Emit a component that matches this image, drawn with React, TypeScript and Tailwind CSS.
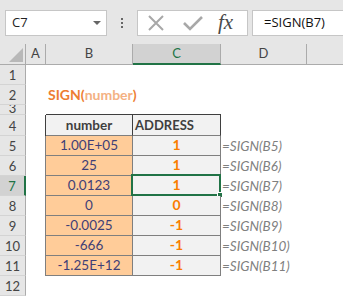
import React from "react";

const cellFont = { fontFamily: "Lato, 'Liberation Sans', sans-serif" };
const uiFont = { fontFamily: "'Open Sans', 'Noto Sans', sans-serif" };

const dataRows = [
  { n: 5, v: "1.00E+05", r: "1", f: "=SIGN(B5)" },
  { n: 6, v: "25", r: "1", f: "=SIGN(B6)" },
  { n: 7, v: "0.0123", r: "1", f: "=SIGN(B7)" },
  { n: 8, v: "0", r: "0", f: "=SIGN(B8)" },
  { n: 9, v: "-0.0025", r: "-1", f: "=SIGN(B9)" },
  { n: 10, v: "-666", r: "-1", f: "=SIGN(B10)" },
  { n: 11, v: "-1.25E+12", r: "-1", f: "=SIGN(B11)" },
];

function RowHead({ n, sel = false }: { n: number; sel?: boolean }) {
  return (
    <div
      className={
        "w-[26px] shrink-0 flex items-end justify-center overflow-hidden border-b border-[#d4d4d4] text-[13px] leading-[18px] " +
        (sel
          ? "bg-[#d2d2d2] border-r-2 border-r-[#217346] text-[#217346]"
          : "bg-[#e6e6e6] border-r border-r-[#ababab] text-[#444444]")
      }
      style={cellFont}
    >
      <span>{n}</span>
    </div>
  );
}

function ColHead({ label, w, sel = false }: { label: string; w: string; sel?: boolean }) {
  return (
    <div
      className={
        w +
        " shrink-0 flex items-center justify-center text-[13px] border-r border-[#ababab] " +
        (sel
          ? "bg-[#d2d2d2] border-b-2 border-b-[#217346] text-[#217346]"
          : "bg-[#e6e6e6] border-b border-b-[#ababab] text-[#444444]")
      }
      style={cellFont}
    >
      {label}
    </div>
  );
}

export default function App() {
  return (
    <div className="w-[343px] h-[296px] overflow-hidden bg-white flex flex-col">
      {/* Formula bar */}
      <div className="h-[44px] shrink-0 bg-[#e6e6e6] flex items-start pt-[10px]">
        <div className="ml-[5px] w-[102px] h-[26px] bg-white border border-[#c6c6c6] flex items-center justify-between pl-[6px] pr-[5px]">
          <span className="text-[13px] text-[#222]" style={uiFont}>C7</span>
          <svg width="8" height="4" viewBox="0 0 8 4">
            <path d="M0 0 L8 0 L4 4 Z" fill="#666" />
          </svg>
        </div>
        <div className="ml-[14px] w-[2px] h-[26px] flex flex-col items-center justify-center gap-[2px]">
          <div className="w-[2px] h-[2px] bg-[#666]" />
          <div className="w-[2px] h-[2px] bg-[#666]" />
          <div className="w-[2px] h-[2px] bg-[#666]" />
        </div>
        <div className="ml-[14px] w-[111px] h-[26px] bg-white border border-[#c6c6c6] flex items-center">
          <svg className="ml-[9px]" width="18" height="16" viewBox="0 0 18 16">
            <path d="M2 1 L16 15 M16 1 L2 15" stroke="#a8a8a8" strokeWidth="2" fill="none" />
          </svg>
          <svg className="ml-[18px]" width="20" height="16" viewBox="0 0 20 16">
            <path d="M1 8 L7 14 L19 2" stroke="#a8a8a8" strokeWidth="2.6" fill="none" />
          </svg>
          <span
            className="ml-[15px] text-[21px] leading-none italic text-[#4a4a4a] -mt-[2px]"
            style={{ fontFamily: "'Liberation Serif', 'DejaVu Serif', serif" }}
          >
            fx
          </span>
        </div>
        <div className="ml-[4px] flex-1 h-[26px] bg-white border border-r-0 border-[#c6c6c6] flex items-center pl-[11px]">
          <span className="text-[13px] text-[#111]" style={uiFont}>=SIGN(B7)</span>
        </div>
      </div>

      {/* Column headers */}
      <div className="h-[21px] shrink-0 flex">
        <div className="w-[26px] shrink-0 bg-[#e6e6e6] border-r border-b border-[#ababab] relative overflow-hidden">
          <svg className="absolute right-[2px] bottom-[2px]" width="14" height="14" viewBox="0 0 14 14">
            <path d="M14 0 L14 14 L0 14 Z" fill="#b8b8b8" />
          </svg>
        </div>
        <ColHead label="A" w="w-[20px]" />
        <ColHead label="B" w="w-[87px]" />
        <ColHead label="C" w="w-[88px]" sel />
        <ColHead label="D" w="w-[86px]" />
        <div className="flex-1 bg-[#e6e6e6] border-b border-[#ababab]" />
      </div>

      {/* Row 1 */}
      <div className="h-[20px] shrink-0 flex">
        <RowHead n={1} />
      </div>

      {/* Row 2 - title */}
      <div className="h-[20px] shrink-0 flex">
        <RowHead n={2} />
        <div className="w-[20px] shrink-0" />
        <div
          className="flex items-end pl-[2px] pb-[1px] text-[14px] font-bold whitespace-nowrap leading-[18px]"
          style={cellFont}
        >
          <span className="text-[#ed7d31]">SIGN(</span>
          <span className="text-[#f4b183]">number</span>
          <span className="text-[#ed7d31]">)</span>
        </div>
      </div>

      {/* Row 3 - short */}
      <div className="h-[10px] shrink-0 flex">
        <div className="w-[26px] shrink-0 bg-[#e6e6e6] border-r border-b border-r-[#ababab] border-b-[#d4d4d4] relative overflow-hidden">
          <span
            className="absolute left-0 right-0 text-center -bottom-[3px] text-[13px] leading-[18px] text-[#444444]"
            style={cellFont}
          >
            3
          </span>
        </div>
        <div className="w-[20px] shrink-0" />
        <div className="w-[87px] shrink-0 border-b border-[#3f3f3f]" />
        <div className="w-[88px] shrink-0 border-b border-[#3f3f3f]" />
      </div>

      {/* Row 4 - header */}
      <div className="h-[21px] shrink-0 flex">
        <RowHead n={4} />
        <div className="w-[20px] shrink-0 border-r border-[#3f3f3f]" />
        <div
          className="w-[87px] shrink-0 bg-[#f2f2f2] border-r border-r-[#3f3f3f] border-b border-b-[#7f7f7f] flex items-end justify-center pb-[1px] text-[13.5px] leading-[18px] font-bold text-[#3f3f3f]"
          style={cellFont}
        >
          number
        </div>
        <div
          className="w-[88px] shrink-0 bg-[#f2f2f2] border-r border-r-[#3f3f3f] border-b border-b-[#7f7f7f] flex items-end pl-[2px] pb-[1px] text-[13px] leading-[18px] font-bold text-[#3f3f3f]"
          style={cellFont}
        >
          ADDRESS
        </div>
      </div>

      {/* Data rows */}
      {dataRows.map((d) => {
        const sel = d.n === 7;
        return (
          <div key={d.n} className="h-[20px] shrink-0 flex">
            <RowHead n={d.n} sel={sel} />
            <div className="w-[20px] shrink-0 border-r border-[#7f7f7f]" />
            <div
              className="w-[87px] shrink-0 bg-[#ffcc99] border-r border-b border-[#7f7f7f] flex items-end justify-center pb-[1px] text-[13.5px] leading-[18px] text-[#3f3f76]"
              style={cellFont}
            >
              {d.v}
            </div>
            <div
              className="w-[88px] shrink-0 bg-[#f2f2f2] border-r border-b border-[#7f7f7f] flex items-end justify-center pb-[1px] text-[14px] leading-[18px] font-bold text-[#fa7d00] relative"
              style={cellFont}
            >
              {d.r}
              {sel && (
                <div className="absolute -left-[2px] -top-[2px] -right-[1px] -bottom-[1px] border-2 border-[#217346]">
                  <div className="absolute -right-[4px] -bottom-[4px] w-[6px] h-[6px] bg-[#217346] border border-white" />
                </div>
              )}
            </div>
            <div
              className="flex-1 flex items-end pl-[1px] pb-[1px] text-[13.5px] leading-[18px] italic text-[#7f7f7f] whitespace-nowrap"
              style={cellFont}
            >
              {d.f}
            </div>
          </div>
        );
      })}

      {/* Row 12 */}
      <div className="h-[20px] shrink-0 flex">
        <RowHead n={12} />
      </div>
    </div>
  );
}
